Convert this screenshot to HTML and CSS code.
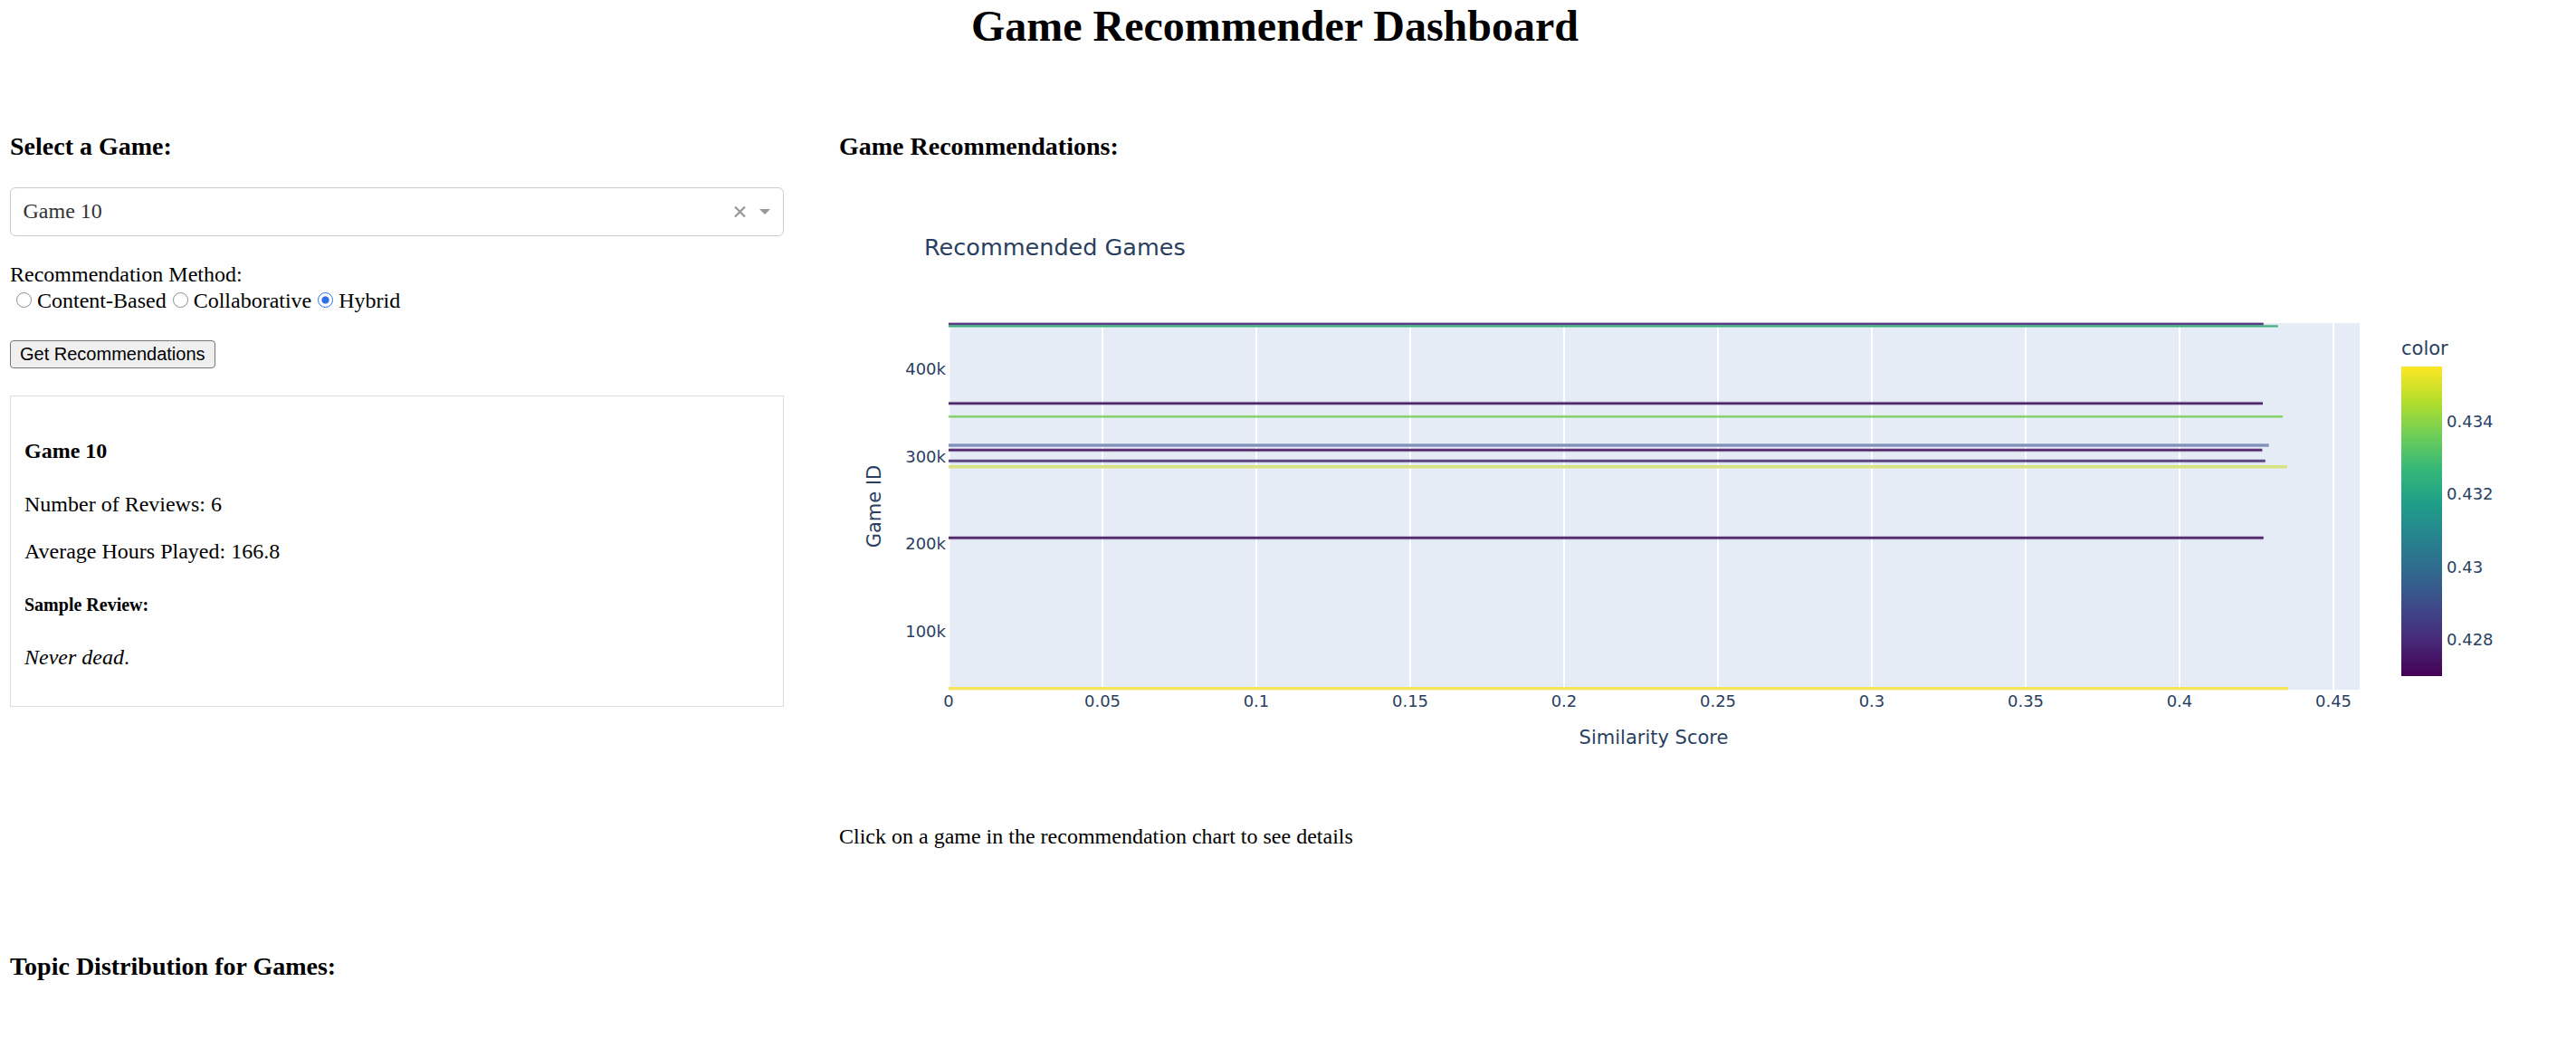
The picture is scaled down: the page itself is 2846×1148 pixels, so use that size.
FILE: index.html
```html
<!DOCTYPE html>
<html lang="en">
<head>
<meta charset="utf-8">
<title>Game Recommender Dashboard</title>
<link rel="stylesheet" href="styles.css">
</head>
<body>
<h1 class="title">Game Recommender Dashboard</h1>
<div class="main">
  <div class="left">
    <h3 class="section-title">Select a Game:</h3>
    <div class="dropdown">
      <span class="dd-value">Game 10</span>
      <svg class="dd-clear" width="13" height="12" viewBox="0 0 13 12"><path d="M1 0.5 L12 11.5 M12 0.5 L1 11.5" stroke="#999" stroke-width="2.3" fill="none"/></svg>
      <span class="dd-arrow"></span>
    </div>
    <div class="method-label">Recommendation Method:</div>
    <div class="radios"><label class="radio-item"><input type="radio" name="method" class="radio">Content-Based</label><label class="radio-item"><input type="radio" name="method" class="radio">Collaborative</label><label class="radio-item"><input type="radio" name="method" class="radio" checked>Hybrid</label></div>
    <button class="btn" type="button">Get Recommendations</button>
    <div class="details">
      <h4 class="details-title">Game 10</h4>
      <p class="details-text">Number of Reviews: 6</p>
      <p class="details-text">Average Hours Played: 166.8</p>
      <h5 class="details-sub">Sample Review:</h5>
      <p class="details-text"><em>Never dead</em>.</p>
    </div>
  </div>
  <div class="right">
    <h3 class="section-title">Game Recommendations:</h3>
    <div class="chart">
      <svg class="chart-svg" width="1880" height="675" viewBox="0 0 1880 675">
        <defs>
          <linearGradient id="viridis" x1="0" y1="1" x2="0" y2="0">
            <stop offset="0" stop-color="#440154"/>
            <stop offset="0.1111" stop-color="#482878"/>
            <stop offset="0.2222" stop-color="#3e4989"/>
            <stop offset="0.3333" stop-color="#31688e"/>
            <stop offset="0.4444" stop-color="#26828e"/>
            <stop offset="0.5556" stop-color="#1f9e89"/>
            <stop offset="0.6667" stop-color="#35b779"/>
            <stop offset="0.7778" stop-color="#6ece58"/>
            <stop offset="0.8889" stop-color="#b5de2b"/>
            <stop offset="1" stop-color="#fde725"/>
          </linearGradient>
        </defs>
        <text class="chart-title" x="94" y="75">Recommended Games</text>
        <rect x="121" y="150" width="1559" height="405" fill="#e5ecf6"/>
        <g stroke="#ffffff" stroke-width="2">
          <line x1="291" y1="150" x2="291" y2="555"/>
          <line x1="461" y1="150" x2="461" y2="555"/>
          <line x1="631" y1="150" x2="631" y2="555"/>
          <line x1="801" y1="150" x2="801" y2="555"/>
          <line x1="971" y1="150" x2="971" y2="555"/>
          <line x1="1141" y1="150" x2="1141" y2="555"/>
          <line x1="1311" y1="150" x2="1311" y2="555"/>
          <line x1="1481" y1="150" x2="1481" y2="555"/>
          <line x1="1651" y1="150" x2="1651" y2="555"/>
        </g>
        <line x1="121" y1="150" x2="121" y2="555" stroke="#ffffff" stroke-width="3"/>
        <g>
          <rect x="121" y="149" width="1452.7" height="4" fill="#553a80" opacity="0.4"/>
          <rect x="121" y="150" width="1452.7" height="2" fill="#553a80"/>
          <rect x="121" y="151.8" width="1468.7" height="3" fill="#3fae7e" opacity="0.4"/>
          <rect x="121" y="152.5" width="1468.7" height="1.8" fill="#3fae7e"/>
          <rect x="121" y="236.7" width="1452" height="4" fill="#43175f" opacity="0.35"/>
          <rect x="121" y="237.7" width="1452" height="2" fill="#43175f"/>
          <rect x="121" y="251.8" width="1474" height="3" fill="#7fcf5f" opacity="0.4"/>
          <rect x="121" y="252.4" width="1474" height="1.8" fill="#7fcf5f"/>
          <rect x="121" y="283.3" width="1458.7" height="3.4" fill="#8390bb"/>
          <rect x="121" y="288.3" width="1451.3" height="4" fill="#461560" opacity="0.35"/>
          <rect x="121" y="289.3" width="1451.3" height="2" fill="#461560"/>
          <rect x="121" y="300.3" width="1454.7" height="4" fill="#4a3176" opacity="0.35"/>
          <rect x="121" y="301.3" width="1454.7" height="2" fill="#4a3176"/>
          <rect x="121" y="307" width="1478.7" height="3.4" fill="#d8e37f"/>
          <rect x="121" y="385.3" width="1452.7" height="4" fill="#45145e" opacity="0.35"/>
          <rect x="121" y="386.3" width="1452.7" height="2" fill="#45145e"/>
          <rect x="121" y="552" width="1480" height="3.4" fill="#f4e55a"/>
        </g>
        <g class="tick" text-anchor="middle">
          <text x="121" y="574">0</text>
          <text x="291" y="574">0.05</text>
          <text x="461" y="574">0.1</text>
          <text x="631" y="574">0.15</text>
          <text x="801" y="574">0.2</text>
          <text x="971" y="574">0.25</text>
          <text x="1141" y="574">0.3</text>
          <text x="1311" y="574">0.35</text>
          <text x="1481" y="574">0.4</text>
          <text x="1651" y="574">0.45</text>
        </g>
        <text class="axis-title" x="900" y="615" text-anchor="middle">Similarity Score</text>
        <g class="tick" text-anchor="end">
          <text x="118" y="207.4">400k</text>
          <text x="118" y="304">300k</text>
          <text x="118" y="400.4">200k</text>
          <text x="118" y="497">100k</text>
        </g>
        <text class="axis-title" x="46" y="352.5" text-anchor="middle" transform="rotate(-90 46 352.5)">Game ID</text>
        <text class="axis-title" x="1726" y="185">color</text>
        <rect x="1726" y="198" width="45" height="342" fill="url(#viridis)"/>
        <g class="tick">
          <text x="1776" y="265.4">0.434</text>
          <text x="1776" y="345.4">0.432</text>
          <text x="1776" y="426.4">0.43</text>
          <text x="1776" y="506.4">0.428</text>
        </g>
      </svg>
    </div>
    <p class="hint">Click on a game in the recommendation chart to see details</p>
  </div>
</div>
<h3 class="section-title topic">Topic Distribution for Games:</h3>
</body>
</html>
```

FILE: styles.css
```css
* {
  box-sizing: border-box;
}

html,
body {
  background: #ffffff;
}

body {
  margin: 0;
  padding: 0 40px 0 11px;
  font-family: "Liberation Serif", "Times New Roman", serif;
  font-size: 24px;
  line-height: 27.6px;
  color: #000000;
}

.title {
  margin: 1px 0 0;
  font-size: 48px;
  line-height: 55.2px;
  font-weight: bold;
  text-align: center;
}

.main {
  display: flex;
  align-items: flex-start;
  padding-top: 62px;
}

.left {
  width: 855px;
  flex: none;
}

.right {
  flex: 1;
  min-width: 0;
  margin-left: 61px;
}

.section-title {
  margin: 28px 0;
  font-size: 28px;
  line-height: 32.3px;
  font-weight: bold;
}

.dropdown {
  display: flex;
  align-items: center;
  height: 54px;
  padding: 0 14.5px 0 13.5px;
  border: 1.5px solid #cccccc;
  border-radius: 6px;
  background: #ffffff;
  color: #333333;
}

.dd-value {
  flex: 1;
}

.dd-clear {
  display: block;
  margin-right: 15px;
}

.dd-arrow {
  width: 0;
  height: 0;
  border-left: 6.5px solid transparent;
  border-right: 6.5px solid transparent;
  border-top: 6.5px solid #999999;
}

.method-label {
  margin-top: 29.4px;
}

.radios {
  line-height: 30.4px;
}

.radio-item {
  cursor: pointer;
}

.radio {
  appearance: none;
  -webkit-appearance: none;
  display: inline-block;
  width: 17px;
  height: 17px;
  margin: 0 6px 0 7px;
  border: 1px solid #8d8d8d;
  border-radius: 50%;
  background: #ffffff;
  vertical-align: baseline;
}

.radio:checked {
  border: 1.5px solid #2f6fe8;
  background: radial-gradient(circle, #2f6fe8 0 3.6px, #ffffff 4.6px);
}

.btn {
  display: block;
  height: 31px;
  margin-top: 27.9px;
  padding: 0 10px;
  font-family: "Liberation Sans", Arial, sans-serif;
  font-size: 20px;
  color: #000000;
  background: #efefef;
  border: 1.5px solid #767676;
  border-radius: 4px;
}

.details {
  margin-top: 30px;
  padding: 15px;
  border: 1.5px solid #dddddd;
}

.details-title {
  margin: 32px 0;
  font-size: 24px;
  font-weight: bold;
}

.details-text {
  margin: 24px 0;
}

.details-sub {
  margin: 33.3px 0;
  font-size: 20px;
  line-height: 23px;
  font-weight: bold;
}

.chart-svg {
  display: block;
  overflow: visible;
}

.chart-title {
  font-family: "DejaVu Sans", Verdana, sans-serif;
  font-size: 25.5px;
  fill: #2a3f5f;
}

.tick {
  font-family: "DejaVu Sans", Verdana, sans-serif;
  font-size: 18px;
  fill: #2a3f5f;
}

.axis-title {
  font-family: "DejaVu Sans", Verdana, sans-serif;
  font-size: 21px;
  fill: #2a3f5f;
}

.hint {
  margin: 29.4px 0 0;
}

.topic {
  margin-top: 113.7px;
}
```
